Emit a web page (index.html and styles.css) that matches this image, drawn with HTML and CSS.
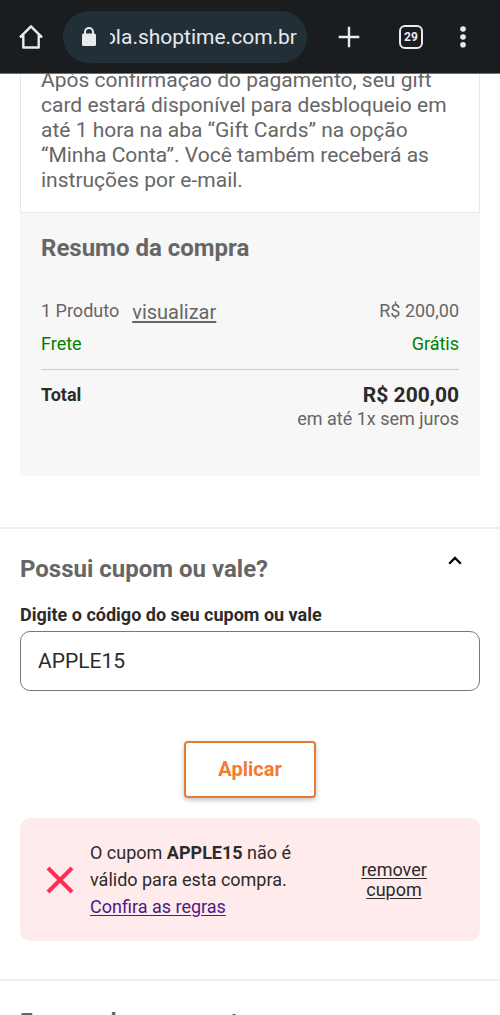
FILE: index.html
```html
<!DOCTYPE html>
<html lang="pt-BR">
<head>
<meta charset="utf-8">
<meta name="viewport" content="width=device-width, initial-scale=1">
<title>Shoptime</title>
<link rel="stylesheet" href="styles.css">
</head>
<body>
<header class="browser-bar">
  <button class="bar-button" type="button" aria-label="Página inicial">
    <svg width="26" height="26" viewBox="0 0 26 26" fill="none" stroke="#e8eaed" stroke-width="2.4" stroke-linejoin="round"><path d="M2 13.3 13 2.3l11 11M5.3 11v12.5h15.4V11"/><path d="M2 12.4h3.8M20.200 12.400H24" stroke-width="2"/></svg>
  </button>
  <div class="address">
    <svg width="16" height="20" viewBox="0 0 16 20"><path fill="none" stroke="#e8eaed" stroke-width="2" d="M4 8V5a4 4 0 0 1 8 0v3"/><rect x="1" y="6.500" width="14" height="12.500" rx="1.600" fill="#e8eaed"/></svg>
    <input class="url" type="text" aria-label="Endereço" value="sacola.shoptime.com.br">
  </div>
  <button class="bar-button" type="button" aria-label="Nova aba">
    <svg width="22" height="22" viewBox="0 0 22 22" stroke="#e8eaed" stroke-width="2.4"><path d="M11 .7v20.600M.7 11h20.600"/></svg>
  </button>
  <button class="bar-button tabs" type="button" aria-label="29 abas">29</button>
  <button class="bar-button" type="button" aria-label="Menu">
    <svg width="6" height="22" viewBox="0 0 6 22" fill="#e8eaed"><circle cx="3" cy="3" r="2.800"/><circle cx="3" cy="11" r="2.800"/><circle cx="3" cy="18.700" r="2.800"/></svg>
  </button>
</header>
<main class="page">
  <section class="order">
    <p class="notice">Após confirmação do pagamento, seu gift card estará disponível para desbloqueio em até 1 hora na aba “Gift Cards” na opção “Minha Conta”. Você também receberá as instruções por e-mail.</p>
    <div class="summary">
      <h2 class="heading">Resumo da compra</h2>
      <div class="row products">
        <div class="items"><span>1 Produto</span><a class="view" href="#">visualizar</a></div>
        <span>R$ 200,00</span>
      </div>
      <div class="row shipping"><span>Frete</span><span>Grátis</span></div>
      <div class="row total">
        <strong>Total</strong>
        <div class="amount"><strong class="price">R$ 200,00</strong><span>em até 1x sem juros</span></div>
      </div>
    </div>
  </section>
  <section class="coupon">
    <div class="coupon-head">
      <h2 class="heading">Possui cupom ou vale?</h2>
      <button class="toggle" type="button" aria-label="Recolher">
        <svg width="14" height="9" viewBox="0 0 14 9" fill="none" stroke="#000" stroke-width="2.3"><path d="m1.200 7.700 5.800-5.800 5.800 5.800"/></svg>
      </button>
    </div>
    <label class="label" for="code">Digite o código do seu cupom ou vale</label>
    <input class="code" id="code" type="text" value="APPLE15">
    <button class="apply" type="button">Aplicar</button>
    <div class="alert">
      <svg class="cross" width="28" height="28" viewBox="0 0 28 28" stroke="#ff2d55" stroke-width="4"><path d="m2 2 24 24M26 2 2 26"/></svg>
      <p class="message">O cupom <strong>APPLE15</strong> não é válido para esta compra. <a class="rules" href="#">Confira as regras</a></p>
      <button class="remove" type="button">remover cupom</button>
    </div>
  </section>
  <section class="payment">
    <h2 class="heading payment-title">Formas de pagamento</h2>
  </section>
</main>
</body>
</html>
```
FILE: styles.css
```css
* {
  box-sizing: border-box;
}

body {
  margin: 0;
  height: 100vh;
  display: flex;
  flex-direction: column;
  overflow: hidden;
  background: #fff;
  color: #2b2b2b;
  font-family: Roboto, sans-serif;
  font-size: 18px;
  line-height: 24px;
}

button,
input {
  font: inherit;
  color: inherit;
}

button {
  padding: 0;
  border: 0;
  background: none;
}

h2,
p {
  margin: 0;
}

svg {
  display: block;
  flex: none;
}

.browser-bar {
  flex: none;
  display: flex;
  align-items: center;
  padding: 11px 34px 10px 18px;
  border-bottom: 1px solid #6c7073;
  background: #191d20;
  color: #e8eaed;
}

.bar-button {
  flex: none;
}

.address {
  flex: 1;
  min-width: 0;
  height: 52px;
  display: flex;
  align-items: center;
  gap: 13px;
  margin: 0 31px 0 19px;
  padding: 0 10px 0 18px;
  border-radius: 26px;
  background: #232f36;
}

.url {
  flex: 1;
  min-width: 0;
  padding: 0;
  border: 0;
  outline: 0;
  background: none;
  direction: rtl;
  font-size: 21px;
}

.tabs {
  width: 24px;
  height: 24px;
  margin: 0 37px 0 39px;
  border: 2px solid #e8eaed;
  border-radius: 6px;
  font-size: 12px;
  font-weight: 700;
  line-height: 20px;
}

.page {
  flex: 1;
  min-height: 0;
  overflow: hidden;
}

.order {
  margin: -6px 20px 51px;
}

.notice {
  padding: 0 20px 19px;
  border: 1px solid #e8e8e8;
  border-top: 0;
  color: #666;
  font-size: 21px;
  line-height: 25px;
}

.summary {
  padding: 19px 21px 45px;
  background: #f7f7f7;
  color: #666;
}

.heading {
  color: #666;
  font-size: 24px;
  font-weight: 700;
  line-height: 32px;
}

.row {
  display: flex;
  justify-content: space-between;
}

.products {
  margin-top: 35px;
}

.items {
  display: flex;
  gap: 13px;
}

.view {
  color: inherit;
  font-size: 20px;
  line-height: 27px;
  text-underline-offset: 2px;
}

.shipping {
  margin-top: 6px;
  padding-bottom: 13px;
  border-bottom: 1px solid #ccc;
  color: #008000;
}

.total {
  padding-top: 13px;
}

.total strong {
  color: #2b2b2b;
}

.amount {
  display: flex;
  flex-direction: column;
  text-align: right;
}

.price {
  font-size: 21px;
}

.coupon {
  padding: 24px 20px 38px;
  border-top: 2px solid #eee;
}

.coupon-head {
  display: flex;
  justify-content: space-between;
}

.toggle {
  align-self: flex-start;
  margin-right: 18px;
  padding-top: 3px;
}

.label {
  display: block;
  margin: 18px 0 4px;
  font-weight: 700;
}

.code {
  display: block;
  width: 100%;
  height: 60px;
  padding: 0 17px;
  border: 1px solid #777;
  border-radius: 10px;
  background: #fff;
  font-size: 21px;
}

.apply {
  display: block;
  margin: 50px auto 20px;
  padding: 14px 32px;
  border: 2px solid #e87a35;
  border-radius: 4px;
  background: #fff;
  box-shadow: 0 2px 5px rgba(0, 0, 0, 0.25);
  color: #f37b30;
  font-size: 20px;
  font-weight: 700;
  line-height: 25px;
}

.alert {
  display: flex;
  align-items: center;
  padding: 21px 46px 21px 26px;
  border-radius: 10px;
  background: #ffeaec;
}

.message {
  width: 230px;
  margin-left: 16px;
  line-height: 27px;
}

.rules {
  color: #4b1a86;
  display: block;
  text-underline-offset: 2px;
}

.remove {
  width: 80px;
  margin-left: auto;
  line-height: 20px;
  text-decoration: underline;
  text-underline-offset: 2px;
}

.payment {
  padding: 26px 20px;
  border-top: 2px solid #eee;
}

.payment-title {
  font-size: 23px;
}
```
